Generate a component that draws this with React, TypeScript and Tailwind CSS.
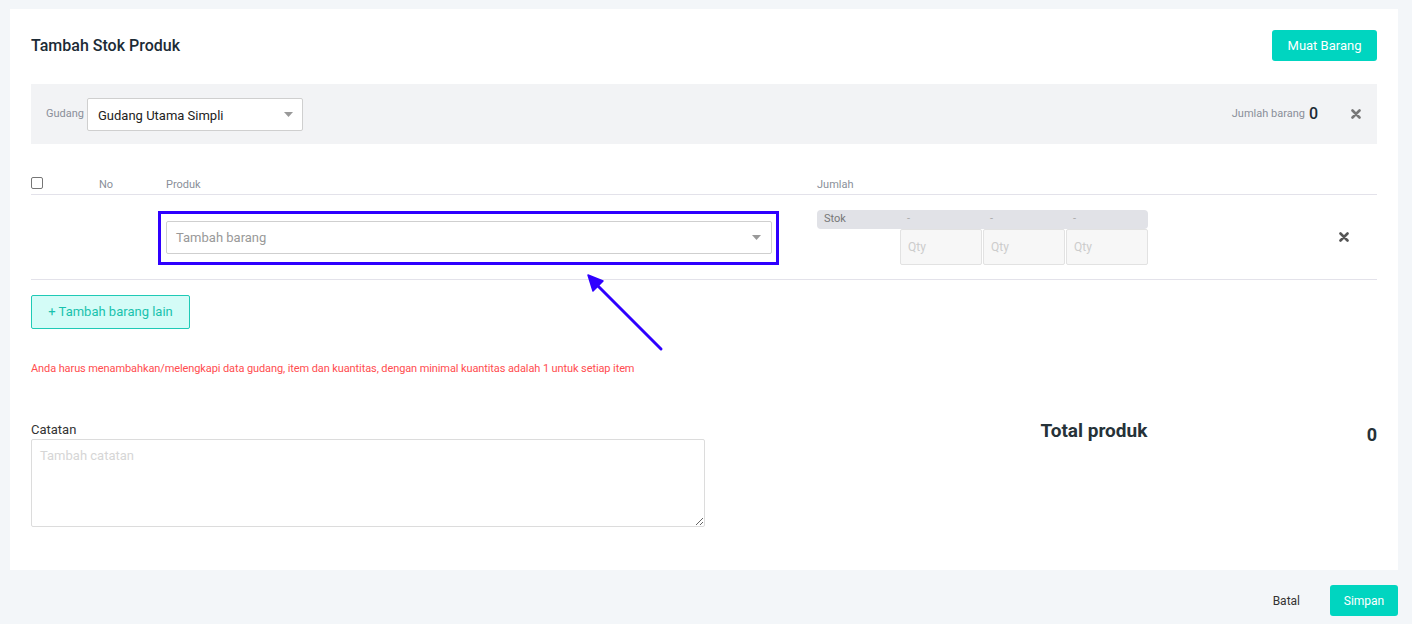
const teal = "bg-[#00d5c0]";

const Caret = () => (
  <svg width="9" height="5" viewBox="0 0 9 5" className="shrink-0">
    <path d="M0 0h9L4.5 5z" fill="#999" />
  </svg>
);

const CloseX = ({ className = "" }: { className?: string }) => (
  <svg width="10" height="10" viewBox="0 0 10 10" className={className}>
    <path d="M1.5 1.5L8.5 8.5M8.5 1.5L1.5 8.5" stroke="currentColor" strokeWidth="2.6" strokeLinecap="round" />
  </svg>
);

const QtyCol = () => (
  <div className="flex flex-col">
    <div className="h-[19px] flex items-center pl-[7px] text-[11px] text-[#aaa]">-</div>
    <div className="h-[36px] border border-[#e2e2e2] rounded-[2px] bg-[#f7f7f7] flex items-center pl-[7px] text-[12px] text-[#ccc]">
      Qty
    </div>
  </div>
);

export default function App() {
  return (
    <div
      className="relative w-[1412px] h-[624px] bg-[#f3f6f9] pt-[9px] overflow-hidden"
      style={{ fontFamily: "Roboto, 'Liberation Sans', sans-serif" }}
    >
      {/* Card */}
      <div className="ml-[10px] w-[1388px] bg-white pt-[21px] px-[21px] pb-[43px]">
        {/* Title row */}
        <div className="h-[31px] flex items-center justify-between">
          <h1 className="text-[16px] font-medium text-[#1c2b36]">Tambah Stok Produk</h1>
          <button className={`${teal} h-[31px] w-[105px] rounded-[3px] text-white text-[13px]`}>
            Muat Barang
          </button>
        </div>

        {/* Gudang bar */}
        <div className="mt-[23px] h-[60px] bg-[#f2f3f5] pl-[15px] pr-[16px] flex items-center justify-between">
          <div className="flex items-center">
            <span className="text-[11px] text-[#8a8f99] mr-[3px]">Gudang</span>
            <div className="w-[216px] h-[33px] bg-white border border-[#cfcfcf] rounded-[2px] flex items-center justify-between pl-[10px] pr-[9px]">
              <span className="text-[13px] text-[#222] pt-[3px]">Gudang Utama Simpli</span>
              <Caret />
            </div>
          </div>
          <div className="flex items-center">
            <span className="text-[11px] text-[#8a8f99]">Jumlah barang</span>
            <span className="ml-[4px] text-[16px] font-medium text-[#1c2b36]">0</span>
            <CloseX className="ml-[33px] text-[#777]" />
          </div>
        </div>

        {/* Table header */}
        <div className="mt-[28px] h-[23px] flex items-end pb-[3px] border-b border-[#e3e2ea] text-[11px] leading-[13px] text-[#8a8f99]">
          <div className="w-[60px] pb-[2px]">
            <div className="w-[12px] h-[12px] border border-[#767676] rounded-[2px]" />
          </div>
          <div className="w-[67px] pl-[8px]">No</div>
          <div className="w-[651px] pl-[8px]">Produk</div>
          <div className="pl-[8px]">Jumlah</div>
        </div>

        {/* Item row */}
        <div className="flex items-start pt-[16px] pb-[14px] border-b border-[#e3e2ea]">
          <div className="w-[127px]" />
          <div className="w-[651px]">
            <div className="w-[621px] border-[3px] border-[#2f00ff] pl-[5px] pr-[4px] pt-[7px] pb-[8px]">
              <div className="h-[33px] border border-[#cfcfcf] rounded-[2px] flex items-center justify-between pl-[9px] pr-[10px]">
                <span className="text-[13px] text-[#999]">Tambah barang</span>
                <Caret />
              </div>
            </div>
          </div>
          <div className="pl-[8px] -mt-[1px] relative">
            <div className="absolute left-[8px] top-0 w-[331px] h-[19px] bg-[#e1e2e7] rounded-[4px]" />
            <div className="relative flex">
              <div className="w-[83px] h-[19px] flex items-center pl-[7px] text-[11px] text-[#777]">Stok</div>
              <div className="grid grid-cols-3 w-[248px] gap-x-[1px]">
                <QtyCol />
                <QtyCol />
                <QtyCol />
              </div>
            </div>
          </div>
          <div className="flex-1 flex justify-end pr-[28px] pt-[21px]">
            <CloseX className="text-[#555]" />
          </div>
        </div>

        {/* Add more */}
        <button className="mt-[15px] h-[34px] w-[159px] bg-[#d4fcf7] border border-[#1fcab6] rounded-[2px] text-[13px] text-[#19c2ad]">
          + Tambah barang lain
        </button>

        <p className="mt-[33px] text-[11px] leading-[13px] tracking-[-0.1px] text-[#ff4d4f]">
          Anda harus menambahkan/melengkapi data gudang, item dan kuantitas, dengan minimal kuantitas adalah 1 untuk setiap item
        </p>

        {/* Notes & total */}
        <div className="mt-[47px] grid grid-cols-2">
          <div>
            <label className="block text-[13px] leading-[16px] text-[#333]">Catatan</label>
            <textarea
              placeholder="Tambah catatan"
              className="mt-[1px] block w-[674px] h-[88px] border border-[#dcdcdc] rounded-[2px] px-[8px] py-[6px] text-[13px] placeholder:text-[#d6d6d6] outline-none"
            />
          </div>
          <div className="grid grid-cols-2">
            <div />
            <div className="flex justify-between items-start">
              <span className="text-[19px] font-bold text-[#263238] leading-[18px]">Total produk</span>
              <span className="text-[18px] font-bold text-[#263238] leading-[20px] mt-[3px]">0</span>
            </div>
          </div>
        </div>
      </div>

      {/* Footer */}
      <div className="ml-[10px] w-[1388px] mt-[15px] flex justify-end items-center">
        <button className="text-[12px] text-[#333] mr-[30px]">Batal</button>
        <button className={`${teal} h-[31px] w-[68px] rounded-[3px] text-white text-[12px]`}>Simpan</button>
      </div>

      {/* Annotation arrow */}
      <svg className="absolute left-0 top-0 pointer-events-none" width="1412" height="624">
        <line x1="661" y1="349" x2="596" y2="284" stroke="#2f00ff" strokeWidth="3" strokeLinecap="round" />
        <path d="M588 275L593 291L603 281Z" fill="#2f00ff" stroke="#2f00ff" strokeWidth="1.5" strokeLinejoin="round" />
      </svg>
    </div>
  );
}
